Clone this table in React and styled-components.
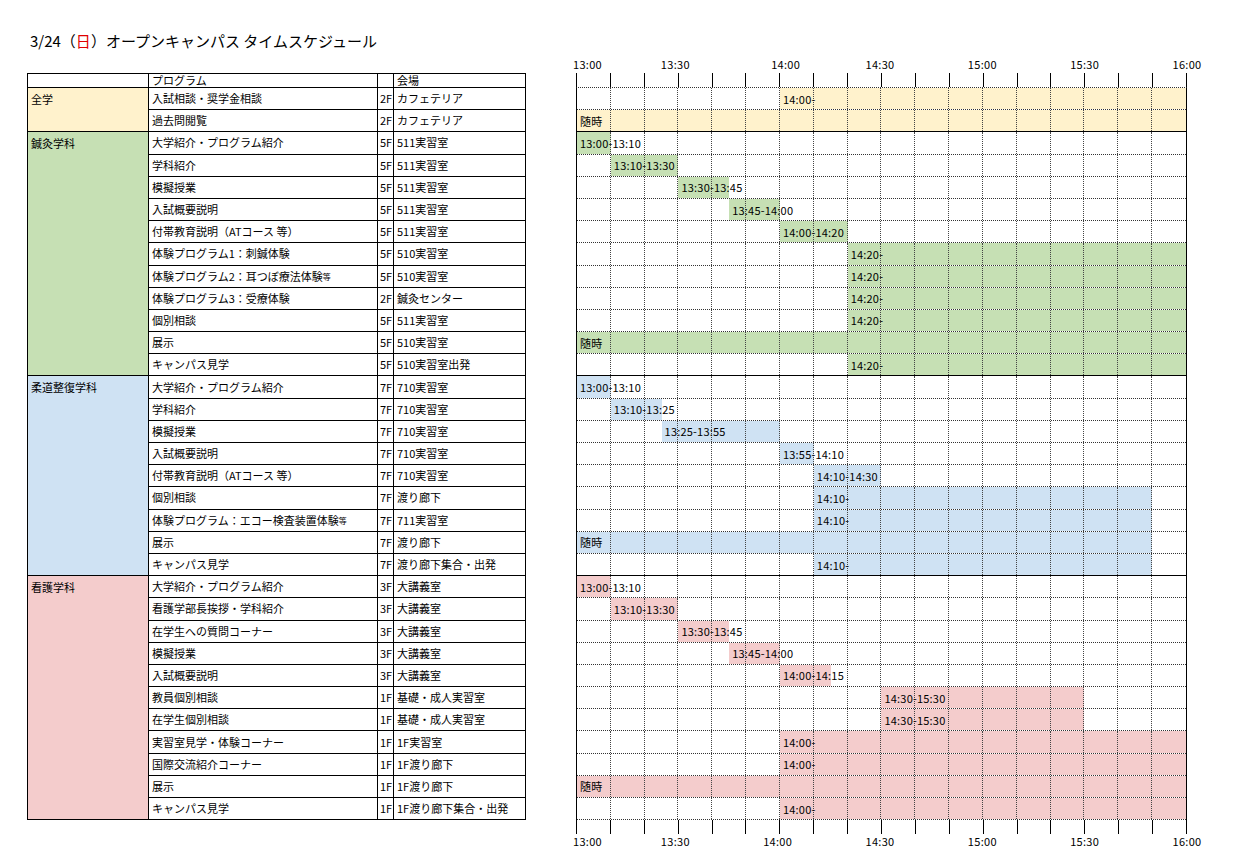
import React from 'react'
import styled, { createGlobalStyle } from 'styled-components'

const GlobalStyle = createGlobalStyle`
  body {
    margin: 0;
    background: #fff;
    color: #000;
    font-family: "Noto Sans CJK JP", "Noto Sans", sans-serif;
  }
`

const YELLOW = '#fff2cc'
const GREEN = '#c6e0b4'
const BLUE = '#cfe2f3'
const PINK = '#f4cccc'

// [program, floor, place, start(min from 13:00), end, label, small suffix]
const sections = [
  {
    name: '全学',
    color: YELLOW,
    rows: [
      ['入試相談・奨学金相談', '2F', 'カフェテリア', 60, 180, '14:00-'],
      ['過去問閲覧', '2F', 'カフェテリア', 0, 180, '随時'],
    ],
  },
  {
    name: '鍼灸学科',
    color: GREEN,
    rows: [
      ['大学紹介・プログラム紹介', '5F', '511実習室', 0, 10, '13:00-13:10'],
      ['学科紹介', '5F', '511実習室', 10, 30, '13:10-13:30'],
      ['模擬授業', '5F', '511実習室', 30, 45, '13:30-13:45'],
      ['入試概要説明', '5F', '511実習室', 45, 60, '13:45-14:00'],
      ['付帯教育説明（ATコース 等）', '5F', '511実習室', 60, 80, '14:00-14:20'],
      ['体験プログラム1：刺鍼体験', '5F', '510実習室', 80, 180, '14:20-'],
      ['体験プログラム2：耳つぼ療法体験', '5F', '510実習室', 80, 180, '14:20-', '等'],
      ['体験プログラム3：受療体験', '2F', '鍼灸センター', 80, 180, '14:20-'],
      ['個別相談', '5F', '511実習室', 80, 180, '14:20-'],
      ['展示', '5F', '510実習室', 0, 180, '随時'],
      ['キャンパス見学', '5F', '510実習室出発', 80, 180, '14:20-'],
    ],
  },
  {
    name: '柔道整復学科',
    color: BLUE,
    rows: [
      ['大学紹介・プログラム紹介', '7F', '710実習室', 0, 10, '13:00-13:10'],
      ['学科紹介', '7F', '710実習室', 10, 25, '13:10-13:25'],
      ['模擬授業', '7F', '710実習室', 25, 60, '13:25-13:55'],
      ['入試概要説明', '7F', '710実習室', 60, 70, '13:55-14:10'],
      ['付帯教育説明（ATコース 等）', '7F', '710実習室', 70, 90, '14:10-14:30'],
      ['個別相談', '7F', '渡り廊下', 70, 170, '14:10-'],
      ['体験プログラム：エコー検査装置体験', '7F', '711実習室', 70, 170, '14:10-', ' 等'],
      ['展示', '7F', '渡り廊下', 0, 170, '随時'],
      ['キャンパス見学', '7F', '渡り廊下集合・出発', 70, 170, '14:10-'],
    ],
  },
  {
    name: '看護学科',
    color: PINK,
    rows: [
      ['大学紹介・プログラム紹介', '3F', '大講義室', 0, 10, '13:00-13:10'],
      ['看護学部長挨拶・学科紹介', '3F', '大講義室', 10, 30, '13:10-13:30'],
      ['在学生への質問コーナー', '3F', '大講義室', 30, 45, '13:30-13:45'],
      ['模擬授業', '3F', '大講義室', 45, 60, '13:45-14:00'],
      ['入試概要説明', '3F', '大講義室', 60, 75, '14:00-14:15'],
      ['教員個別相談', '1F', '基礎・成人実習室', 90, 150, '14:30-15:30'],
      ['在学生個別相談', '1F', '基礎・成人実習室', 90, 150, '14:30-15:30'],
      ['実習室見学・体験コーナー', '1F', '1F実習室', 60, 180, '14:00-'],
      ['国際交流紹介コーナー', '1F', '1F渡り廊下', 60, 180, '14:00-'],
      ['展示', '1F', '1F渡り廊下', 0, 180, '随時'],
      ['キャンパス見学', '1F', '1F渡り廊下集合・出発', 60, 180, '14:00-'],
    ],
  },
]

const times = ['13:00', '13:30', '14:00', '14:30', '15:00', '15:30', '16:00']

const Page = styled.div`
  padding-top: 31px;
  padding-bottom: 20px;
`

const Title = styled.h1`
  margin: 0 0 6px 30px;
  font-size: 15px;
  line-height: 20px;
  font-weight: normal;
`

const Red = styled.span`
  color: #e00000;
`

const Content = styled.div`
  display: flex;
  align-items: flex-start;
  gap: 50px;
  padding-left: 27px;
`

const Table = styled.div`
  margin-top: 16px;
  display: grid;
  grid-template-columns: 121px 229px 16px 132px;
  grid-template-rows: 14px;
  grid-auto-rows: 22.2px;
  border-top: 1px solid #000;
  border-left: 1px solid #000;
`

const Cell = styled.div`
  box-sizing: border-box;
  display: flex;
  align-items: ${(p) => (p.$head ? 'flex-start' : 'center')};
  padding-left: ${(p) => p.$pad ?? 3}px;
  border-right: 1px solid #000;
  border-bottom: 1px solid #000;
  font-size: 11px;
  line-height: ${(p) => (p.$head ? 12 : 13)}px;
  white-space: nowrap;
  overflow: ${(p) => (p.$head ? 'visible' : 'hidden')};
  background: ${(p) => p.$bg || '#fff'};
`

const GroupCell = styled.div`
  box-sizing: border-box;
  grid-column: 1;
  grid-row: span ${(p) => p.$span};
  padding: 4px 3px 0;
  border-right: 1px solid #000;
  border-bottom: 1px solid #000;
  font-size: 11px;
  line-height: 14px;
  background: ${(p) => p.$bg};
`

const Small = styled.span`
  font-size: 8px;
`

const Chart = styled.div`
  width: 611px;
  display: flex;
  flex-direction: column;
`

const LabelRow = styled.div`
  height: ${(p) => p.$h}px;
  display: flex;
  justify-content: space-between;
  align-items: flex-start;
`

const TimeLabel = styled.div`
  width: 0;
  display: flex;
  justify-content: ${(p) => (p.$first ? 'flex-start' : 'center')};
  margin-left: ${(p) => (p.$first ? -3 : 0)}px;
  transform: translateX(${(p) => p.$shift || 0}px);
  font-size: 11px;
  line-height: 14px;
  white-space: nowrap;
  letter-spacing: 0.3px;
`

const Ticks = styled.div`
  box-sizing: border-box;
  height: 14px;
  display: grid;
  grid-template-columns: repeat(18, minmax(0, 1fr));
  border-right: 1px solid #000;
`

const Tick = styled.div`
  border-left: 1px solid #000;
`

const Body = styled.div`
  border-left: 1px solid #000;
  border-right: 1px solid #000;
  border-top: 1px dotted #333;
`

const ChartRow = styled.div`
  box-sizing: border-box;
  height: 22.2px;
  display: grid;
  grid-template-columns: repeat(36, minmax(0, 1fr));
  border-bottom: 1px ${(p) => (p.$end ? 'solid #000' : 'dotted #333')};
`

const Bar = styled.div`
  grid-row: 1;
  grid-column: ${(p) => `${p.$from} / ${p.$to}`};
  background: ${(p) => p.$bg};
`

const GridLine = styled.div`
  grid-row: 1;
  grid-column: ${(p) => `${p.$col} / span 2`};
  border-right: ${(p) => (p.$last ? 'none' : '1px dotted #444')};
  z-index: 1;
`

const BarLabel = styled.div`
  grid-row: 1;
  grid-column: ${(p) => `${p.$from} / span 1`};
  align-self: center;
  z-index: 2;
  padding-left: 3px;
  font-size: 11px;
  line-height: 14px;
  white-space: nowrap;
  letter-spacing: 0.2px;
`

function TimeLabels({ h, shifts = {} }) {
  return (
    <LabelRow $h={h}>
      {times.map((t, i) => (
        <TimeLabel key={t} $first={i === 0} $shift={shifts[t]}>
          {t}
        </TimeLabel>
      ))}
    </LabelRow>
  )
}

function TickRow() {
  return (
    <Ticks>
      {Array.from({ length: 18 }, (_, i) => (
        <Tick key={i} />
      ))}
    </Ticks>
  )
}

function ScheduleRow({ row, color, end }) {
  const [, , , start, stop, label] = row
  const from = start / 5 + 1
  const to = stop / 5 + 1
  return (
    <ChartRow $end={end}>
      <Bar $from={from} $to={to} $bg={color} />
      {Array.from({ length: 18 }, (_, i) => (
        <GridLine key={i} $col={i * 2 + 1} $last={i === 17} />
      ))}
      <BarLabel $from={from}>{label}</BarLabel>
    </ChartRow>
  )
}

export default function App() {
  return (
    <Page>
      <GlobalStyle />
      <Title>
        3/24（<Red>日</Red>）オープンキャンパス タイムスケジュール
      </Title>
      <Content>
        <Table>
          <Cell $head />
          <Cell $head>プログラム</Cell>
          <Cell $head />
          <Cell $head>会場</Cell>
          {sections.map((s) => (
            <React.Fragment key={s.name}>
              <GroupCell $span={s.rows.length} $bg={s.color}>
                {s.name}
              </GroupCell>
              {s.rows.map((r, i) => (
                <React.Fragment key={i}>
                  <Cell>
                    {r[0]}
                    {r[6] && <Small>{r[6]}</Small>}
                  </Cell>
                  <Cell $pad={2}>{r[1]}</Cell>
                  <Cell>{r[2]}</Cell>
                </React.Fragment>
              ))}
            </React.Fragment>
          ))}
        </Table>
        <Chart>
          <TimeLabels h={16} shifts={{ '14:00': 8 }} />
          <TickRow />
          <Body>
            {sections.map((s, si) =>
              s.rows.map((r, i) => (
                <ScheduleRow
                  key={`${si}-${i}`}
                  row={r}
                  color={s.color}
                  end={i === s.rows.length - 1 && si < sections.length - 1}
                />
              ))
            )}
          </Body>
          <TickRow />
          <TimeLabels h={14} />
        </Chart>
      </Content>
    </Page>
  )
}
